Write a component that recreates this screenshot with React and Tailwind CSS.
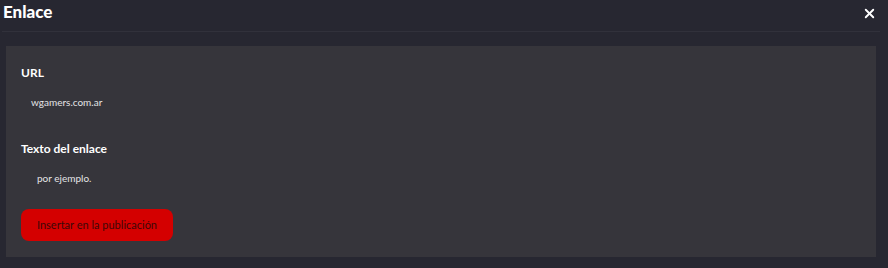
import React from 'react';
import { X } from 'lucide-react';

const Field = ({ label, value, indent }) => (
  <div className="flex flex-col">
    <label className="h-4 text-[12px] font-bold leading-4 text-white">{label}</label>
    <div className={`mt-[6px] flex h-[30px] items-center text-[10px] font-normal text-[#e4e4e6] ${indent}`}>{value}</div>
  </div>
);

const App = () => {
  return (
    <div className="h-[268px] w-[888px] overflow-hidden bg-[#272731] font-['Lato',sans-serif]">
      {/* Header */}
      <div className="mx-[2px] flex h-[32px] w-[878px] items-start justify-between border-b border-[#31313b] pl-[1px] pr-[3px] pt-[2px]">
        <h2 className="text-[17px] font-black leading-[20px] text-white">Enlace</h2>
        <X size={15} strokeWidth={3} className="mt-[4px] text-white" />
      </div>

      {/* Body */}
      <div className="ml-[6px] mt-[14px] flex h-[211px] w-[870px] flex-col bg-[#36353b] px-[15px] pt-[19px]">
        <Field label="URL" value="wgamers.com.ar" indent="pl-[10px]" />
        <div className="mt-[24px]">
          <Field label="Texto del enlace" value="por ejemplo." indent="pl-[16px]" />
        </div>
        <button className="mt-[16px] h-[32px] w-[152px] rounded-lg bg-[#d40000] text-[11px] text-[#3d0808]">
          Insertar en la publicación
        </button>
      </div>
    </div>
  );
};

export default App;
